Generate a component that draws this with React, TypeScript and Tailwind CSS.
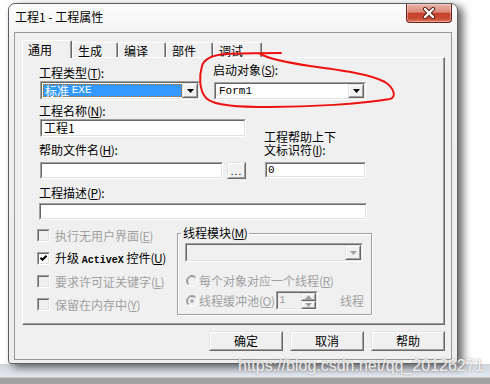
import React from 'react';

type Kids = { children?: React.ReactNode };

// mnemonic letter, e.g. (T)
const Key: React.FC<{ k: string }> = ({ k }) => (
  <span className="tracking-[-0.5px]">
    (<span className="underline">{k}</span>)
  </span>
);

const Sunken: React.FC<Kids & { className?: string; inner?: string }> = ({ className = '', inner = 'bg-white', children }) => (
  <div className={`border border-t-[#a0a0a0] border-l-[#a0a0a0] border-b-white border-r-white ${className}`}>
    <div className={`h-full border border-t-[#696969] border-l-[#696969] border-b-[#e3e3e3] border-r-[#e3e3e3] ${inner}`}>
      {children}
    </div>
  </div>
);

const Raised: React.FC<Kids & { className?: string; inner?: string }> = ({ className = '', inner = '', children }) => (
  <div className={`border border-t-[#e3e3e3] border-l-[#e3e3e3] border-b-[#696969] border-r-[#696969] bg-[#f0f0f0] ${className}`}>
    <div className={`h-full border border-t-white border-l-white border-b-[#a0a0a0] border-r-[#a0a0a0] flex items-center justify-center ${inner}`}>
      {children}
    </div>
  </div>
);

const Arrow: React.FC<{ color?: string; up?: boolean }> = ({ color = '#000', up }) => (
  <svg width="7" height="4" viewBox="0 0 7 4" className="block">
    <path d={up ? 'M0 4h7L3.5 0z' : 'M0 0h7L3.5 4z'} fill={color} />
  </svg>
);

const Combo: React.FC<Kids & { className: string; disabled?: boolean }> = ({ className, disabled, children }) => (
  <Sunken className={className} inner={`flex ${disabled ? 'bg-[#f0f0f0]' : 'bg-white'}`}>
    <div className="flex-1 min-w-0 flex items-stretch">{children}</div>
    <Raised className="w-[16px] h-full">
      <Arrow color={disabled ? '#a0a0a0' : '#000'} />
    </Raised>
  </Sunken>
);

const CheckBox: React.FC<{ checked?: boolean; disabled?: boolean }> = ({ checked, disabled }) => (
  <Sunken className="w-[13px] h-[13px] shrink-0" inner={disabled ? 'bg-[#f0f0f0]' : 'bg-white'}>
    {checked && (
      <svg width="9" height="9" viewBox="0 0 9 9" className="block">
        <path d="M1.5 3.8l2 2 4-4" stroke="#000" strokeWidth="2" fill="none" />
      </svg>
    )}
  </Sunken>
);

const Radio: React.FC<{ selected?: boolean }> = ({ selected }) => (
  <svg width="12" height="12" viewBox="0 0 12 12" className="shrink-0 block">
    <circle cx="6" cy="6" r="5.5" fill="#f0f0f0" />
    <path d="M2.1 9.9A5.5 5.5 0 0 1 9.9 2.1" stroke="#a0a0a0" fill="none" />
    <path d="M9.9 2.1A5.5 5.5 0 0 1 2.1 9.9" stroke="#ffffff" fill="none" />
    <path d="M2.8 9.2A4.5 4.5 0 0 1 9.2 2.8" stroke="#8a8a8a" fill="none" />
    {selected && <circle cx="6" cy="6" r="1.8" fill="#a0a0a0" />}
  </svg>
);

const mono = "font-['Liberation_Mono',monospace]";

const Tab: React.FC<Kids & { w: string; active?: boolean }> = ({ w, active, children }) =>
  active ? (
    <div className={`${w} relative z-10 h-[18px] -mb-px bg-[#f0f0f0] border-l border-t border-r border-l-white border-t-white border-r-[#696969] rounded-t-[2px] shadow-[inset_-1px_0_0_#a0a0a0] pl-[5px] pt-[2px] leading-[14px]`}>
      {children}
    </div>
  ) : (
    <div className={`${w} h-[15px] bg-[#f0f0f0] border-l border-t border-r border-l-white border-t-white border-r-[#696969] rounded-t-[2px] shadow-[inset_-1px_0_0_#a0a0a0] pl-[5px] pt-[1px] leading-[14px]`}>
      {children}
    </div>
  );

const Button: React.FC<Kids> = ({ children }) => (
  <Raised className="w-[74px] h-[20px]" inner="leading-[14px]">
    {children}
  </Raised>
);

export default function App() {
  return (
    <div className="relative w-[490px] h-[384px] overflow-hidden bg-white flex flex-col text-[12px] text-black font-['Noto_Sans_CJK_SC',sans-serif]">
      <div className="h-[364px] pl-[8px] pt-[3px] relative z-10">
        {/* window */}
        <div className="w-[450px] h-[361px] rounded-t-[7px] rounded-b-[3px] border border-[#5f5f5f] bg-[linear-gradient(to_bottom,#fdfdfd,#f0f0f0_40px,#eeeeee)] shadow-[5px_3px_9px_rgba(0,0,0,0.6)] flex flex-col">
          {/* title bar */}
          <div className="h-[28px] flex items-start">
            <div className="pl-[6px] pt-[6px] leading-[14px] text-[12px]">工程1 - 工程属性</div>
            <div className="flex-1" />
            <div className="mr-[5px] w-[46px] h-[19px] rounded-b-[4px] border border-t-0 border-[#6b2419] bg-[linear-gradient(to_bottom,#ebb5aa_0%,#dc8a7a_45%,#c5432d_52%,#c84a33_80%,#e27a60_100%)] shadow-[inset_0_0_0_1px_rgba(255,255,255,0.35)] flex items-center justify-center">
              <svg width="14" height="12" viewBox="0 0 14 12">
                <path d="M3 2l8 8M11 2l-8 8" stroke="#5a2018" strokeWidth="4.2" strokeLinecap="round" />
                <path d="M3 2l8 8M11 2l-8 8" stroke="#ffffff" strokeWidth="2.4" strokeLinecap="round" />
              </svg>
            </div>
          </div>

          {/* client area */}
          <div className="mx-[5px] w-[438px] h-[328px] border border-[#979797] bg-[#f0f0f0] pl-[7px] pt-[7px]">
            {/* tabs */}
            <div className="flex items-end h-[17px]">
              <Tab w="w-[50px]" active>通用</Tab>
              <Tab w="w-[46px]">生成</Tab>
              <Tab w="w-[48px]">编译</Tab>
              <Tab w="w-[47px]">部件</Tab>
              <Tab w="w-[49px]">调试</Tab>
            </div>

            {/* tab panel */}
            <div className="w-[423px] h-[268px] border border-t-white border-l-white border-b-[#696969] border-r-[#696969] shadow-[inset_-1px_-1px_0_#a0a0a0] flex flex-col">
              {/* row: project type / startup object */}
              <div className="flex items-start">
                <div className="ml-[16px] w-[161px] pt-[8px]">
                  <div className="leading-[14px]">
                    工程类型<Key k="T" />:
                  </div>
                  <Combo className="ml-[1px] mt-px w-[160px] h-[19px]">
                    <div className="ml-px my-px w-[139px] bg-[#3399ff] border border-dotted border-[#cc6600] text-white leading-[11px] pl-[1px] flex items-center">
                      标准&nbsp;<span className={`${mono} text-[11px]`}>EXE</span>
                    </div>
                  </Combo>
                </div>
                <div className="ml-[13px] pt-[5px]">
                  <div className="leading-[14px]">
                    启动对象<Key k="S" />:
                  </div>
                  <Combo className="ml-[1px] mt-[5px] w-[152px] h-[18px]">
                    <div className={`${mono} text-[11px] pl-[3px] flex items-center`}>Form1</div>
                  </Combo>
                </div>
              </div>

              {/* row: name, help file / help context */}
              <div className="flex items-start">
                <div className="ml-[16px] w-[207px] flex flex-col">
                  <div className="mt-[4px] leading-[14px]">
                    工程名称<Key k="N" />:
                  </div>
                  <Sunken className="ml-px mt-px w-[206px] h-[18px]" inner="bg-white flex items-center">
                    <span className="pl-[2px] leading-[14px]">工程1</span>
                  </Sunken>
                  <div className="mt-[6px] leading-[14px]">
                    帮助文件名<Key k="H" />:
                  </div>
                  <div className="ml-px mt-[5px] flex items-start">
                    <Sunken className="w-[183px] h-[17px]" />
                    <Raised className="ml-[4px] w-[19px] h-[17px]" inner="items-end pb-[2px]">
                      <span className="text-[10px] leading-[8px] tracking-[1px]">...</span>
                    </Raised>
                  </div>
                </div>
                <div className="ml-[18px] mt-[30px] flex flex-col">
                  <div className="leading-[13px]">工程帮助上下</div>
                  <div className="leading-[13px]">
                    文标识符<Key k="I" />:
                  </div>
                  <Sunken className="ml-px mt-[6px] w-[101px] h-[16px]" inner="bg-white flex items-center">
                    <span className={`${mono} text-[11px] pl-[1px]`}>0</span>
                  </Sunken>
                </div>
              </div>

              {/* row: description */}
              <div className="ml-[16px] mt-[7px] leading-[14px]">
                工程描述<Key k="P" />:
              </div>
              <Sunken className="ml-[16px] mt-[3px] w-[328px] h-[17px]" />

              {/* row: options + threading */}
              <div className="flex items-start">
                <div className="ml-[14px] w-[140px] mt-[4px] flex flex-col">
                  <div className="h-[23px] flex items-center gap-[5px] text-[#a0a0a0]">
                    <CheckBox disabled />
                    <span>执行无用户界面<Key k="E" /></span>
                  </div>
                  <div className="h-[23px] flex items-center gap-[5px]">
                    <CheckBox checked />
                    <span className="whitespace-nowrap">
                      升级 <span className={`${mono} text-[10px] font-bold`}>ActiveX</span> 控件<Key k="U" />
                    </span>
                  </div>
                  <div className="h-[23px] flex items-center gap-[5px] text-[#a0a0a0]">
                    <CheckBox disabled />
                    <span>要求许可证关键字<Key k="L" /></span>
                  </div>
                  <div className="h-[23px] flex items-center gap-[5px] text-[#a0a0a0]">
                    <CheckBox disabled />
                    <span>保留在内存中<Key k="Y" /></span>
                  </div>
                </div>

                <fieldset className="mt-[6px] w-[191px] border border-[#a0a0a0] shadow-[inset_1px_1px_0_#ffffff,1px_1px_0_#ffffff] px-[7px] pb-[4px]">
                  <legend className="-ml-[4px] px-[2px] leading-[14px]">
                    线程模块<Key k="M" />
                  </legend>
                  <Combo className="mt-[3px] w-[178px] h-[19px]" disabled />
                  <div className="mt-[11px] h-[16px] flex items-center text-[#a0a0a0]">
                    <div className="ml-px">
                      <Radio />
                    </div>
                    <span className="ml-px">每个对象对应一个线程<Key k="R" /></span>
                  </div>
                  <div className="mt-[2px] h-[19px] flex items-center whitespace-nowrap text-[#a0a0a0]">
                    <div className="ml-px shrink-0">
                      <Radio selected />
                    </div>
                    <span className="ml-px w-[77px] shrink-0">线程缓冲池<Key k="O" /></span>
                    <Sunken className="w-[42px] h-[19px] shrink-0" inner="bg-[#f0f0f0] flex">
                      <span className={`${mono} text-[11px] pl-[1px] flex-1 flex items-center`}>1</span>
                      <div className="w-[15px] flex flex-col">
                        <Raised className="flex-1">
                          <Arrow color="#a0a0a0" up />
                        </Raised>
                        <Raised className="flex-1">
                          <Arrow color="#a0a0a0" />
                        </Raised>
                      </div>
                    </Sunken>
                    <span className="ml-[22px] shrink-0">线程</span>
                  </div>
                </fieldset>
              </div>
            </div>

            {/* buttons */}
            <div className="w-[423px] mt-[6px] flex justify-end gap-[7px]">
              <Button>确定</Button>
              <Button>取消</Button>
              <Button>帮助</Button>
            </div>
          </div>
        </div>
      </div>

      {/* taskbar strip below the dialog */}
      <div className="h-[13px] bg-[linear-gradient(to_bottom,#cfd5dc,#e2e8ef)]" />
      <div className="flex-1 bg-[#a2a2a2] border-t border-[#c9c9c9]" />

      {/* red hand-drawn mark */}
      <svg className="absolute inset-0 z-20 pointer-events-none" width="490" height="384" viewBox="0 0 490 384">
        <path
          d="M281 53C265 53 240 53 226 54C213 55 204 59 202 66C199 76 199 90 206 98C214 106 240 107 270 107C310 107 360 104 390 99C397 97 394 88 385 82C370 74 340 70 310 66C290 63 272 60 260 54"
          stroke="#ee1111"
          strokeWidth="2"
          fill="none"
          strokeLinecap="round"
        />
      </svg>

      {/* watermark */}
      <div className="absolute z-20 left-[238px] top-[356px] text-[16px] leading-[20px] text-white/85 font-['Liberation_Sans',sans-serif] [text-shadow:0_0_2px_rgba(120,120,120,0.9)]">
        https://blog.csdn.net/qq_20126271
      </div>
    </div>
  );
}
